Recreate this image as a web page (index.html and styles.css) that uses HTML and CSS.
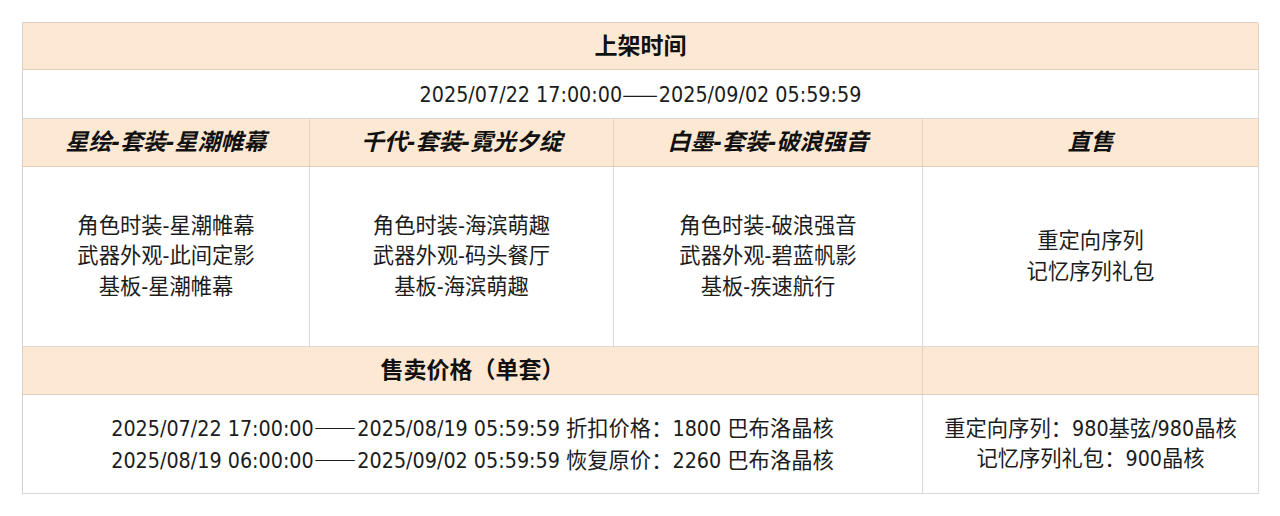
FILE: index.html
```html
<!DOCTYPE html>
<html lang="zh-CN">
<head>
<meta charset="utf-8">
<title>上架时间</title>
<link rel="stylesheet" href="styles.css">
</head>
<body>
<div class="sheet">
  <div class="cell head span4"><div class="txt">上架时间</div></div>
  <div class="cell span4"><div class="txt">2025/07/22 17:00:00<span class="dash">——</span>2025/09/02 05:59:59</div></div>
  <div class="cell head em"><div class="txt">星绘-套装-星潮帷幕</div></div>
  <div class="cell head em"><div class="txt">千代-套装-霓光夕绽</div></div>
  <div class="cell head em"><div class="txt">白墨-套装-破浪强音</div></div>
  <div class="cell head em"><div class="txt">直售</div></div>
  <div class="cell"><div class="txt">角色时装-星潮帷幕<br>武器外观-此间定影<br>基板-星潮帷幕</div></div>
  <div class="cell"><div class="txt">角色时装-海滨萌趣<br>武器外观-码头餐厅<br>基板-海滨萌趣</div></div>
  <div class="cell"><div class="txt">角色时装-破浪强音<br>武器外观-碧蓝帆影<br>基板-疾速航行</div></div>
  <div class="cell"><div class="txt">重定向序列<br>记忆序列礼包</div></div>
  <div class="cell head span3"><div class="txt">售卖价格（单套）</div></div>
  <div class="cell head"></div>
  <div class="cell span3"><div class="txt">2025/07/22 17:00:00<span class="dash">——</span>2025/08/19 05:59:59 折扣价格：1800 巴布洛晶核<br>2025/08/19 06:00:00<span class="dash">——</span>2025/09/02 05:59:59 恢复原价：2260 巴布洛晶核</div></div>
  <div class="cell"><div class="txt">重定向序列：980基弦/980晶核<br>记忆序列礼包：900晶核</div></div>
</div>
</body>
</html>
```
FILE: styles.css
```css
html, body {
  margin: 0;
  padding: 0;
  background: #ffffff;
}
body {
  padding: 22px 0 0 22px;
  font-family: "DejaVu Sans Condensed", "Liberation Sans", "Noto Sans CJK SC", sans-serif;
  font-size: 21.3px;
  color: #1c1c1c;
}
.sheet {
  display: grid;
  width: 1236px;
  grid-template-columns: 287px 304px 309px 336px;
  grid-template-rows: 47px 49px 48px 180px 48px 99px;
  border-top: 1px solid #dcd2c8;
  border-left: 1px solid #d6d0ca;
  box-sizing: border-box;
}
.cell {
  box-sizing: border-box;
  border-right: 1px solid #d9d9d9;
  border-bottom: 1px solid #d9d9d9;
  display: flex;
  align-items: center;
  justify-content: center;
}
.txt {
  text-align: center;
  line-height: 30.5px;
  white-space: nowrap;
}
.head {
  background: #fde9d3;
  font-weight: bold;
  font-size: 23px;
  color: #111111;
  border-right-color: #e6d2bf;
  border-bottom-color: #e2cdb8;
}
.em {
  font-style: italic;
}
.dash {
  font-family: "Noto Sans CJK SC", sans-serif;
  letter-spacing: 1px;
}
.span4 { grid-column: span 4; }
.span3 { grid-column: span 3; }
```
